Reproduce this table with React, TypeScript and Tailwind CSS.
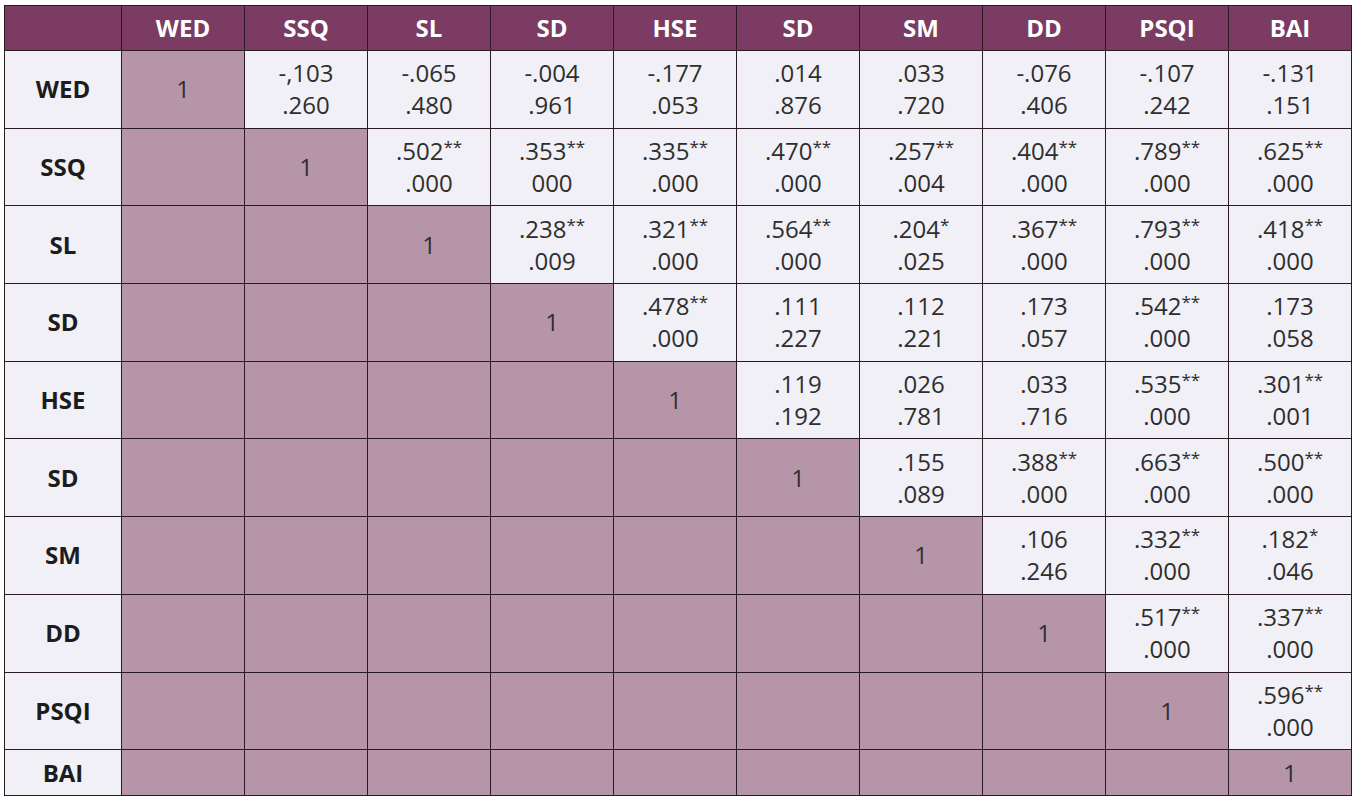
import React from 'react'

const labels = ['WED', 'SSQ', 'SL', 'SD', 'HSE', 'SD', 'SM', 'DD', 'PSQI', 'BAI']

// upper triangle values, per row, starting right after the diagonal
const upper: string[][] = [
  ['-,103|.260', '-.065|.480', '-.004|.961', '-.177|.053', '.014|.876', '.033|.720', '-.076|.406', '-.107|.242', '-.131|.151'],
  ['.502**|.000', '.353**|000', '.335**|.000', '.470**|.000', '.257**|.004', '.404**|.000', '.789**|.000', '.625**|.000'],
  ['.238**|.009', '.321**|.000', '.564**|.000', '.204*|.025', '.367**|.000', '.793**|.000', '.418**|.000'],
  ['.478**|.000', '.111|.227', '.112|.221', '.173|.057', '.542**|.000', '.173|.058'],
  ['.119|.192', '.026|.781', '.033|.716', '.535**|.000', '.301**|.001'],
  ['.155|.089', '.388**|.000', '.663**|.000', '.500**|.000'],
  ['.106|.246', '.332**|.000', '.182*|.046'],
  ['.517**|.000', '.337**|.000'],
  ['.596**|.000'],
  [],
]

function Value({ v }: { v: string }) {
  const [r, p] = v.split('|')
  const m = r.match(/^([^*]*)(\**)$/)
  const num = m ? m[1] : r
  const stars = m ? m[2] : ''
  return (
    <div className="flex flex-col items-center leading-[32px]">
      <span className="h-[32px]">
        {num}
        {stars && <span className="relative -top-[7px] text-[17px] leading-[0]">{stars}</span>}
      </span>
      <span className="h-[32px]">{p}</span>
    </div>
  )
}

export default function App() {
  return (
    <div className="min-h-screen bg-white pl-[4px] pt-[5px] font-['Open_Sans',sans-serif]">
      <table className="border-collapse border border-[#2a1a22] text-[24px] text-[#2e2e2e]">
        <colgroup>
          <col className="w-[117px]" />
          {labels.map((_, i) => (
            <col key={i} className="w-[123px]" />
          ))}
        </colgroup>
        <thead>
          <tr className="h-[45px] bg-[#7b3b62]">
            <th className="border border-[#2a1a22]" />
            {labels.map((l, i) => (
              <th key={i} className="border border-[#2a1a22] text-center text-[24px] font-bold text-white">
                {l}
              </th>
            ))}
          </tr>
        </thead>
        <tbody>
          {labels.map((l, r) => (
            <tr key={r} className={r === labels.length - 1 ? 'h-[46px]' : 'h-[77.7px]'}>
              <th className="border border-[#2a1a22] bg-[#f1f0f6] text-center font-bold text-[#1c1c1c]">{l}</th>
              {labels.map((_, c) => {
                if (c < r) return <td key={c} className="border border-[#2a1a22] bg-[#b795a9]" />
                if (c === r)
                  return (
                    <td key={c} className="border border-[#2a1a22] bg-[#b795a9] text-center">
                      1
                    </td>
                  )
                return (
                  <td key={c} className="border border-[#2a1a22] bg-[#f1f0f6] text-center">
                    <Value v={upper[r][c - r - 1]} />
                  </td>
                )
              })}
            </tr>
          ))}
        </tbody>
      </table>
    </div>
  )
}
